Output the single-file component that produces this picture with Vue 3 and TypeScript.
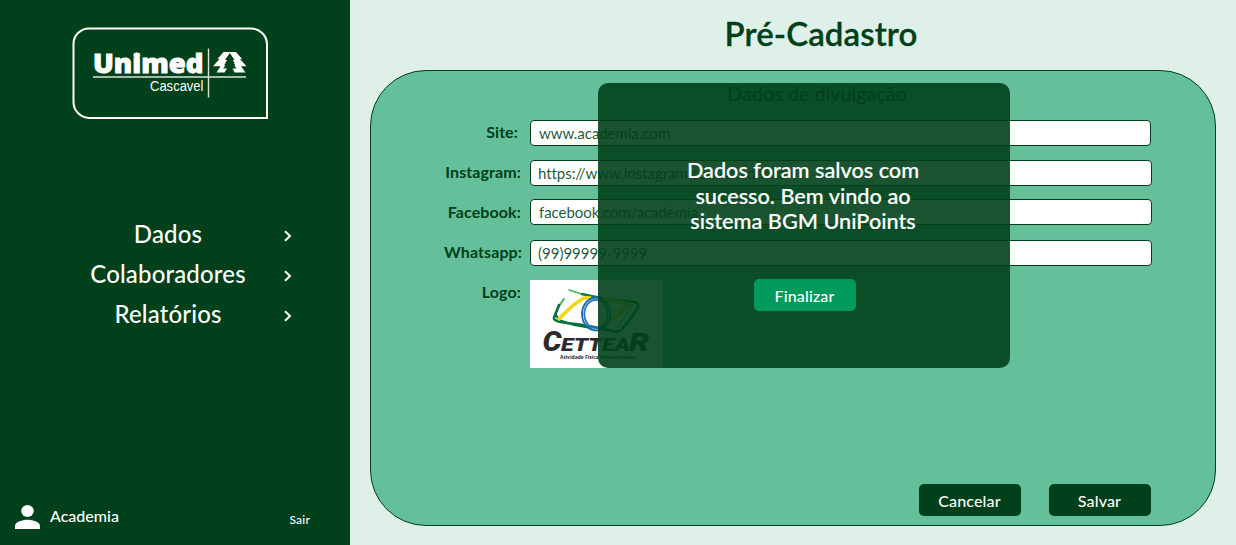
<script setup lang="ts">
interface MenuItem { label: string }
interface Field { id: string; label: string; value: string }

const menu: MenuItem[] = [
  { label: 'Dados' },
  { label: 'Colaboradores' },
  { label: 'Relatórios' },
]

const fields: Field[] = [
  { id: 'site', label: 'Site:', value: 'www.academia.com' },
  { id: 'instagram', label: 'Instagram:', value: 'https://www.instagram.com/academia' },
  { id: 'facebook', label: 'Facebook:', value: 'facebook.com/academia' },
  { id: 'whatsapp', label: 'Whatsapp:', value: '(99)99999-9999' },
]

const message: string[] = ['Dados foram salvos com', 'sucesso. Bem vindo ao', 'sistema BGM UniPoints']
</script>

<template>
  <div class="app">
    <aside class="sidebar">
      <svg class="brand" width="197" height="93" viewBox="0 0 197 93">
        <path d="M195 91H17A16 16 0 0 1 1.5 75.500V17A15.500 15.500 0 0 1 17 1.500H179A16 16 0 0 1 195 17Z" fill="none" stroke="#fff" stroke-width="2" />
        <text class="brand-name" x="21" y="46" textLength="110.500" lengthAdjust="spacingAndGlyphs">Unimed</text>
        <path d="M21 50H174M136.500 21.500V70.500" stroke="#fff" stroke-width="1.400" stroke-opacity="0.850" fill="none" />
        <text class="brand-city" x="78" y="63.500" textLength="53.500" lengthAdjust="spacingAndGlyphs">Cascavel</text>
        <path d="M151.500 25H164L170 32H168L174.500 39.200H169L173.500 45.500H162.500L160.500 41.500H164.500L160.500 36H162.500L157.800 28L153.500 36H155.500L151 41.500H155L152.500 45.500H144.500L148.500 39.200H141L147.500 32H145.500Z" fill="#fff" />
        <path d="M157.800 26L162.500 33H160L163.500 38.500H152L155.500 33H153Z" fill="#00401a" />
      </svg>

      <nav class="menu">
        <a v-for="item in menu" :key="item.label" class="menu-item">
          <span class="menu-label">{{ item.label }}</span>
          <svg class="chevron" width="10" height="14" viewBox="0 0 10 14">
            <path d="M2 2.200L7 7L2 11.800" fill="none" stroke="#fff" stroke-width="2" />
          </svg>
        </a>
      </nav>

      <div class="account">
        <svg class="user" width="25" height="24" viewBox="0 0 24 24" preserveAspectRatio="none">
          <circle cx="12" cy="6" r="6" fill="#fff" />
          <path d="M0 24V21C0 17 7 14.800 12 14.800S24 17 24 21V24Z" fill="#fff" />
        </svg>
        <span class="user-name">Academia</span>
        <a class="logout">Sair</a>
      </div>
    </aside>

    <main class="main">
      <h1 class="title">Pré-Cadastro</h1>
      <section class="panel">
        <h2 class="subtitle">Dados de divulgação</h2>
        <div class="form">
          <div v-for="f in fields" :key="f.id" class="row" :class="f.id">
            <label class="label">{{ f.label }}</label>
            <div class="input">{{ f.value }}</div>
          </div>
          <div class="row logo-row">
            <label class="label">Logo:</label>
            <svg class="logo" width="133" height="88" viewBox="0 0 133 88">
              <rect width="133" height="88" fill="#fff" />
              <g fill="none" stroke-linecap="round" stroke-linejoin="round">
                <path d="M39 10Q52 15 66 17" stroke="#4bb052" stroke-width="1.500" />
                <path d="M52 14Q76 20 105 22Q110 24 107 29Q98 43 91 50Q86 53 77 50" stroke="#078247" stroke-width="2.600" />
                <path d="M60 18Q80 22 103 25L87 48" stroke="#4bb052" stroke-width="1" />
                <path d="M34 19Q27 28 24 37" stroke="#4bb052" stroke-width="2" />
                <path d="M29 25L24 38Q23 41 37 43Q58 45 87 52" stroke="#067040" stroke-width="2.600" />
                <path d="M26 35L29 40L44 45L61 48" stroke="#067040" stroke-width="2" />
                <path d="M29 39Q43 24 53 18.500Q56 17.500 60 18" stroke="#f7d515" stroke-width="3.500" />
                <path d="M74 19Q86 20 98 24Q93 33 80 40" stroke="#f7d515" stroke-width="3.500" />
                <ellipse cx="66" cy="34" rx="14" ry="16.500" stroke="#1768b5" stroke-width="1.800" />
                <ellipse cx="67" cy="34" rx="13" ry="15" stroke="#4d9bd8" stroke-width="1.200" />
                <ellipse cx="66" cy="34" rx="11.500" ry="14" stroke="#2378be" stroke-width="1.500" />
              </g>
              <g class="logo-word">
                <text x="12.500" y="71" font-size="27" textLength="19" lengthAdjust="spacingAndGlyphs">C</text>
                <text x="31" y="71" font-size="18.500" textLength="69" lengthAdjust="spacingAndGlyphs">ETTEA</text>
                <text x="99" y="71" font-size="26" textLength="20" lengthAdjust="spacingAndGlyphs">R</text>
              </g>
              <text class="logo-tag" x="30" y="78.500" textLength="75" lengthAdjust="spacingAndGlyphs">Atividade Física Personalizada</text>
            </svg>
          </div>
        </div>
        <div class="actions">
          <button class="btn">Cancelar</button>
          <button class="btn">Salvar</button>
        </div>
      </section>
    </main>

    <div class="modal">
      <p class="message"><span v-for="line in message" :key="line">{{ line }}</span></p>
      <button class="btn confirm">Finalizar</button>
    </div>
  </div>
</template>

<style>
body { margin: 0; overflow: hidden; }
</style>

<style scoped>
.app {
  position: relative;
  display: flex;
  width: 1236px;
  height: 545px;
  box-sizing: border-box;
  background: #dff0e8;
  color: #00401a;
  font-family: Lato, "Liberation Sans", sans-serif;
  font-weight: 500;
  font-variant-ligatures: none;
  overflow: hidden;
}
.sidebar {
  display: flex;
  flex-direction: column;
  width: 350px;
  height: 545px;
  box-sizing: border-box;
  padding: 27px 0 16px;
  background: #00401a;
  color: #fff;
}
.brand { margin-left: 72px; flex: none; }
.brand-name { font: 800 27px "Open Sans", sans-serif; fill: #fff; stroke: #fff; stroke-width: 0.9px; }
.brand-city { font: 14px "Liberation Sans", sans-serif; fill: #fff; }
.menu { display: flex; flex-direction: column; margin-top: 94px; }
.menu-item { display: flex; align-items: center; height: 40px; }
.menu-label { width: 236px; padding-left: 50px; text-align: center; font-size: 24px; letter-spacing: 0.150px; line-height: 40px; }
.chevron { margin: 4px 0 0 -3px; }
.account { display: flex; align-items: center; margin-top: auto; padding: 0 40px 0 15px; }
.user-name { margin-left: 10px; font-size: 16px; line-height: 22px; padding-bottom: 2px; }
.logout { margin-left: auto; padding-top: 6px; font-size: 12px; letter-spacing: 0.200px; line-height: 18px; }
.main { width: 886px; box-sizing: border-box; padding: 13px 20px 0; }
.title { margin: 0 0 17px; padding-left: 56px; text-align: center; font-size: 33px; letter-spacing: 0.080px; line-height: 40px; font-weight: 600; -webkit-text-stroke: 0.300px #00401a; }
.panel {
  display: flex;
  flex-direction: column;
  width: 846px;
  height: 456px;
  box-sizing: border-box;
  border: 1px solid #00401a;
  border-radius: 56px;
  background: #64c09b;
}
.subtitle { margin: 9px 0 1px; padding-left: 48px; text-align: center; font-size: 19.800px; line-height: 26px; font-weight: 400; }
.form { display: flex; flex-direction: column; padding: 13px 63px 0 0; }
.row { display: flex; align-items: flex-start; height: 40px; }
.label { width: 150px; text-align: right; font-size: 16px; letter-spacing: 0.100px; line-height: 24px; font-weight: 700; margin-right: 9px; }
.input {
  flex: 1;
  height: 26px;
  box-sizing: border-box;
  padding-left: 8px;
  border: 1px solid #00401a;
  border-radius: 4px;
  background: #fff;
  color: rgba(0, 64, 26, 0.88);
  font-size: 15px;
  letter-spacing: -0.050px;
  line-height: 25px;
  font-weight: 400;
}
.site { padding-right: 1px; }
.site .label { width: 147px; margin-right: 12px; }
.instagram { height: 39px; }
.instagram .input, .whatsapp .input { padding-left: 7px; }
.whatsapp .input { letter-spacing: 0; }
.facebook { height: 41px; }
.facebook .label { line-height: 26px; }
.whatsapp .label { width: 151px; margin-right: 8px; }
.logo-word { font-family: Roboto, sans-serif; font-weight: 900; font-style: italic; fill: #2b292d; }
.logo-tag { font: 700 5.5px "Open Sans", sans-serif; fill: #2b292d; }
.actions { display: flex; gap: 28px; justify-content: flex-end; margin: auto 64px 9px 0; }
.btn {
  width: 102px;
  height: 32px;
  padding: 1px 1px 0 0;
  border: 0;
  border-radius: 5px;
  background: #00401a;
  color: #fff;
  font: 500 16px/20px Lato, sans-serif;
  letter-spacing: 0.150px;
}
.modal {
  position: absolute;
  left: 598px;
  top: 83px;
  display: flex;
  flex-direction: column;
  align-items: center;
  width: 412px;
  height: 285px;
  box-sizing: border-box;
  padding: 75px 0 0;
  border-radius: 10px;
  background: rgba(0, 64, 26, 0.9);
  color: #fff;
}
.message { display: flex; flex-direction: column; width: 400px; margin: 0 2px 0 0; text-align: center; font-size: 21.700px; line-height: 25.500px; -webkit-text-stroke: 0.200px #fff; }
.confirm { margin: 44.500px 0 0 2px; background: #009a5d; }
</style>
